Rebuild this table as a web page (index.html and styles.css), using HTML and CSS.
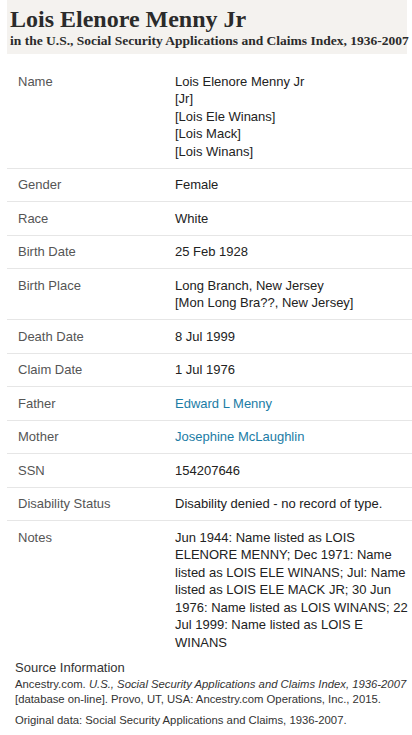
FILE: index.html
```html
<!DOCTYPE html>
<html lang="en">
<head>
	<meta charset="UTF-8">
	<title>Lois Elenore Menny Jr</title>
	<meta name="viewport" content="width=device-width"/>
	<link rel="stylesheet" href="styles.css">
</head>
<body>
	<div class="page">
		<!--title block-->
		<header class="head">
			<h1>Lois Elenore Menny Jr</h1>
			<p class="sub">in the U.S., Social Security Applications and Claims Index, 1936-2007</p>
		</header>
		<!--record table-->
		<table class="rec">
			<tr>
				<th>Name</th>
				<td>Lois Elenore Menny Jr<br>[Jr]<br>[Lois Ele Winans]<br>[Lois Mack]<br>[Lois Winans]</td>
			</tr>
			<tr><th>Gender</th><td>Female</td></tr>
			<tr><th>Race</th><td>White</td></tr>
			<tr><th>Birth Date</th><td>25 Feb 1928</td></tr>
			<tr><th>Birth Place</th><td>Long Branch, New Jersey<br>[Mon Long Bra??, New Jersey]</td></tr>
			<tr><th>Death Date</th><td>8 Jul 1999</td></tr>
			<tr><th>Claim Date</th><td>1 Jul 1976</td></tr>
			<tr><th>Father</th><td><a href="#">Edward L Menny</a></td></tr>
			<tr><th>Mother</th><td><a href="#">Josephine McLaughlin</a></td></tr>
			<tr><th>SSN</th><td>154207646</td></tr>
			<tr><th>Disability Status</th><td>Disability denied - no record of type.</td></tr>
			<tr class="last">
				<th>Notes</th>
				<td>Jun 1944: Name listed as LOIS ELENORE MENNY; Dec 1971: Name listed as LOIS ELE WINANS; Jul: Name listed as LOIS ELE MACK JR; 30 Jun 1976: Name listed as LOIS WINANS; 22 Jul 1999: Name listed as LOIS E WINANS</td>
			</tr>
		</table>
		<!--source-->
		<section class="source">
			<h2>Source Information</h2>
			<p>Ancestry.com. <em>U.S., Social Security Applications and Claims Index, 1936-2007</em> [database on-line]. Provo, UT, USA: Ancestry.com Operations, Inc., 2015.</p>
			<p class="orig">Original data: Social Security Applications and Claims, 1936-2007.</p>
		</section>
	</div>
</body>
</html>
```

FILE: styles.css
```css
body{
	margin:0;
	background:#fff;
	font-family:"Liberation Sans", Arial, sans-serif;
	color:#222;
}
.page{
	width:412px;
}
/*header*/
.head{
	margin:0 5px 0 7px;
	height:54px;
	background:#f4f2ef;
	padding:0 0 0 3px;
	box-sizing:border-box;
	font-family:"Liberation Serif", "Times New Roman", serif;
	color:#2b2b2b;
}
.head h1{
	margin:0;
	padding-top:6px;
	font-size:24px;
	line-height:26px;
	font-weight:bold;
}
.head .sub{
	margin:1px 0 0;
	font-size:13.5px;
	line-height:16px;
	font-weight:bold;
	white-space:nowrap;
}
/*table*/
.rec{
	margin:11px 0 0 7px;
	width:405px;
	border-collapse:collapse;
	font-size:13px;
	line-height:17.5px;
}
.rec tr{
	border-bottom:1px solid #e6e6e6;
}
.rec tr.last{
	border-bottom:none;
}
.rec th{
	width:157px;
	padding:7.5px 0 7.5px 11px;
	text-align:left;
	vertical-align:top;
	font-weight:normal;
	color:#555;
}
.rec td{
	padding:7.5px 0;
	vertical-align:top;
	color:#222;
}
.rec a{
	color:#1b7ca5;
	text-decoration:none;
}
/*source*/
.source{
	padding:0 0 0 15px;
	color:#333;
}
.source h2{
	margin:0;
	font-size:13px;
	line-height:18px;
	font-weight:normal;
}
.source p{
	margin:0;
	font-size:11.3px;
	line-height:15px;
}
.source .orig{
	margin-top:6px;
}
```
